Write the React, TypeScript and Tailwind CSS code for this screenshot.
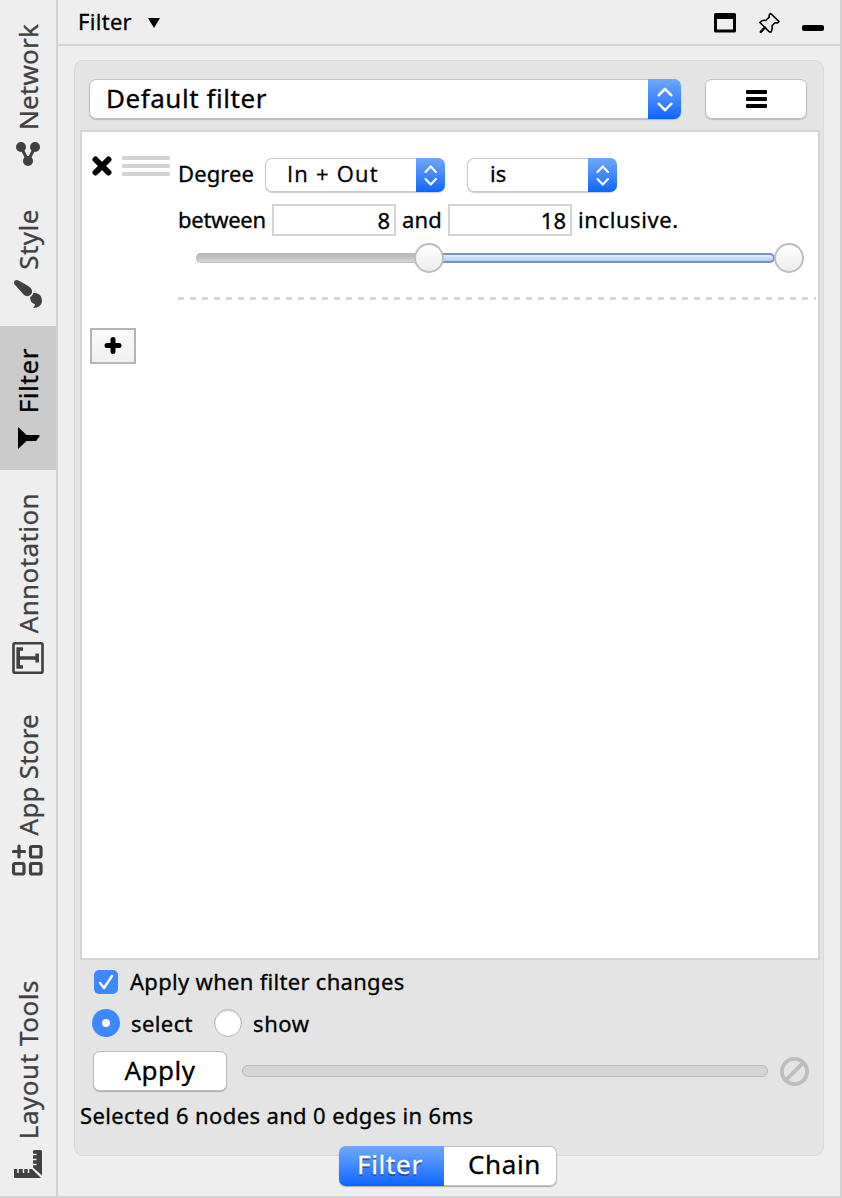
import React from "react";

function Arrows({ className, size }: { className: string; size: number }) {
  return (
    <span className={`flex shrink-0 items-center justify-center bg-linear-to-b from-[#6ea7fc] to-[#0564ff] ${className}`}>
      <svg width={size * 0.64} height={size} viewBox="0 0 16 25" fill="none" stroke="#fff" strokeWidth="2.6" strokeLinecap="round" strokeLinejoin="round">
        <path d="M1.8 8.2 8 1.8l6.2 6.4M1.8 16.8 8 23.2l6.2-6.4" />
      </svg>
    </span>
  );
}

function SideTab({ label, className, tracking, icon }: { label: string; className: string; tracking: string; icon: React.ReactNode }) {
  return (
    <div className={`flex w-14 shrink-0 flex-col items-center justify-end ${className}`}>
      <span className={`rotate-180 text-[26px] leading-[56px] whitespace-nowrap [writing-mode:vertical-rl] ${tracking}`}>{label}</span>
      {icon}
    </div>
  );
}

function Knob({ className }: { className: string }) {
  return <span className={`absolute top-0 size-[30px] rounded-full border-2 border-[#bdbdbd] bg-linear-to-b from-white to-[#ececec] ${className}`} />;
}

export default function App() {
  return (
    <div className="flex h-[1198px] w-[842px] overflow-hidden border-r-2 border-b-2 border-[#d3d3d3] bg-[#eeeeee] font-['Noto_Sans','Open_Sans',sans-serif] text-[22px] leading-[30px] whitespace-nowrap text-black [-webkit-text-stroke:0.3px]">
      <nav className="flex w-[58px] shrink-0 flex-col border-r-2 border-[#d3d3d3] text-[#404040]">
        <SideTab label="Network" className="h-[187px] pb-[21px]" tracking="tracking-[0.2px]"
          icon={
            <svg className="mt-[12px]" width="24" height="24" viewBox="0 0 24 24" fill="currentColor" stroke="currentColor">
              <path d="M5 5 12 19 19 5" fill="none" strokeWidth="3" />
              <circle cx="5" cy="5" r="5" stroke="none" /><circle cx="19" cy="5" r="5" stroke="none" /><circle cx="12" cy="19" r="5" stroke="none" />
            </svg>
          } />
        <SideTab label="Style" className="h-[139px] pb-[18px]" tracking="tracking-[0.5px]"
          icon={
            <svg className="mt-[10px] -rotate-90" width="28" height="28" viewBox="0 0 1792 1792" fill="currentColor">
              <path d="M1615 0q70 0 122.500 46.500t52.500 116.500q0 63-45 151-332 629-465 752-97 91-218 91-126 0-216.500-92.500t-90.500-219.500q0-128 92-212l638-579q59-54 130-54zm-909 1034q39 76 106.500 130t150.500 76l1 71q4 213-129.500 347t-348.500 134q-123 0-218-46.500t-152.500-127.500-86.500-183-29-220q7 5 41 30t62 44.500 59 36.500 46 17q41 0 55-37 25-66 57.500-112.500t69.500-76 88-47.500 103-25.500 125-10.500z" />
            </svg>
          } />
        <SideTab label="Filter" className="h-36 bg-[#cbcbcb] pb-[21px] text-black" tracking="tracking-[0.6px]"
          icon={
            <svg className="mt-[14px] ml-[2px]" width="22" height="22" viewBox="0 0 22 22" fill="currentColor">
              <path d="M0 0 8.500 8H21.500V9.500L18 14H8.500L0 22Z" />
            </svg>
          } />
        <SideTab label="Annotation" className="h-[222px] pb-[18px]" tracking="tracking-[0.4px]"
          icon={
            <svg className="mt-[9px] -ml-px" width="32" height="32" viewBox="0 0 32 32" fill="none" stroke="currentColor">
              <rect x="1.500" y="1.300" width="29" height="29.400" rx="1.5" strokeWidth="2.6" />
              <path d="M11 7H6.200V25H11M6 16H25M25.200 11.500V20.500" strokeWidth="3.6" />
            </svg>
          } />
        <SideTab label="App Store" className="h-[202px] pb-[18px]" tracking="tracking-[0.2px]"
          icon={
            <svg className="mt-[9px]" width="32" height="32" viewBox="0 0 32 32" fill="none" stroke="currentColor" strokeWidth="3.2">
              <path d="M1.500 7.500H12.500M7 2V13" strokeLinecap="round" />
              <rect x="18.500" y="2.500" width="10.500" height="10.500" rx="1.8" /><rect x="1.500" y="19.500" width="10.500" height="10.500" rx="1.8" /><rect x="18.500" y="19.500" width="10.500" height="10.500" rx="1.8" />
            </svg>
          } />
        <SideTab label="Layout Tools" className="mt-auto h-[236px] pb-[18px]" tracking="tracking-[0.55px]"
          icon={
            <svg className="mt-[11px] -ml-px" width="28" height="28" viewBox="0 0 28 28">
              <path d="M19 1.500Q19 0 20.500 0H26.500Q28 0 28 1.500V25.500L19 17.500ZM0 19H18L27 28H1.500Q0 28 0 26.500Z" fill="currentColor" />
              <path d="M18.500 4.500H22.500M18.500 9.500H22.500M18.500 14.500H22.500M4 18.500V23M9.500 18.500V23M14.500 18.500V23" stroke="#eee" strokeWidth="1.5" />
            </svg>
          } />
      </nav>

      <main className="flex min-w-0 flex-1 flex-col">
        <header className="flex h-[46px] shrink-0 items-center border-b-2 border-[#d3d3d3] pr-4 pl-5">
          <span className="-mt-0.5 tracking-[0.3px]">Filter</span>
          <svg className="ml-4 mt-px" width="12" height="10" viewBox="0 0 12 10"><path d="M0 0H12L6 10Z" /></svg>
          <div className="ml-auto flex items-center">
            <svg className="mt-px" width="22" height="20" viewBox="0 0 22 20" fillRule="evenodd"><path d="M1.500 0H20.500Q22 0 22 1.500V18Q22 19.500 20.500 19.500H1.500Q0 19.500 0 18V1.500Q0 0 1.500 0ZM3 6V16.500H19V6Z" /></svg>
            <svg className="mt-px ml-[23px]" width="22" height="22" viewBox="0 0 22 22" fill="none" stroke="#000" strokeWidth="1.6" strokeLinejoin="round" strokeLinecap="round">
              <path d="M11.700 1.500 19.900 9.300Q19.500 11.500 16 10.700L13 13.800Q13.700 17.500 12 20L10.500 20 0.900 10.500Q3.500 7.600 6.700 8.500L10.300 5.200Q9.500 2.500 11.700 1.500Z" /><path d="M6 15.500 1.800 19.800" strokeWidth="2.4" />
            </svg>
            <span className="mt-3 ml-[21px] h-1.5 w-[22px] rounded-[2px] bg-black" />
          </div>
        </header>

        <section className="mt-[14px] ml-4 flex h-[1096px] w-[750px] shrink-0 flex-col rounded-[9px] border border-[#d9d9d9] bg-[#e4e4e4]">
          <div className="mt-[18px] ml-[14px] flex h-10">
            <button className="flex w-[592px] overflow-hidden rounded-[7px] bg-white shadow-[inset_0_0_0_1px_#c0c0c0,0_1px_1px_#bbb]">
              <span className="flex-1 pl-[17px] text-left text-[26px] leading-[38px] tracking-[0.55px]">Default filter</span>
              <Arrows className="h-10 w-[33px]" size={25} />
            </button>
            <button className="ml-6 flex w-[102px] items-center justify-center rounded-[7px] border border-[#c0c0c0] bg-white shadow-[0_1px_1px_#bbb]">
              <span className="flex flex-col gap-[3.500px]"><i className="h-[3.500px] w-[21px] rounded-[1px] bg-black" /><i className="h-[3.500px] w-[21px] rounded-[1px] bg-black" /><i className="h-[3.500px] w-[21px] rounded-[1px] bg-black" /></span>
            </button>
          </div>

          <div className="mt-[11px] ml-[5px] flex h-[830px] w-[740px] shrink-0 flex-col border-2 border-[#d3d3d3] bg-white">
            <div className="flex h-[168px]">
              <svg className="mt-6 ml-[10px]" width="20" height="20" viewBox="0 0 20 20" stroke="#000" strokeWidth="6" strokeLinecap="round"><path d="M3.500 3.500 16.500 16.500M16.500 3.500 3.500 16.500" /></svg>
              <div className="mt-6 ml-[10px] flex w-12 flex-col gap-1">
                <i className="h-1 rounded-[1px] bg-[#d3d3d3]" /><i className="h-1 rounded-[1px] bg-[#d3d3d3]" /><i className="h-1 rounded-[1px] bg-[#d3d3d3]" />
              </div>
              <div className="ml-2 flex w-[638px] flex-col">
                <div className="mt-[26px] flex h-[34px]">
                  <span className="w-[87px] leading-[31px] tracking-[0.1px]">Degree</span>
                  <button className="flex w-[180px] overflow-hidden rounded-[7px] shadow-[inset_0_0_0_1px_#c8c8c8,0_1px_1px_#ccc]">
                    <span className="flex-1 pl-[22px] text-left font-['Open_Sans',sans-serif] leading-[31px] tracking-[1.2px]">In + Out</span>
                    <Arrows className="h-[34px] w-[29px]" size={21} />
                  </button>
                  <button className="ml-[22px] flex w-[150px] overflow-hidden rounded-[7px] shadow-[inset_0_0_0_1px_#c8c8c8,0_1px_1px_#ccc]">
                    <span className="flex-1 pl-[23px] text-left leading-[31px]">is</span>
                    <Arrows className="h-[34px] w-[29px]" size={21} />
                  </button>
                </div>
                <div className="mt-3 flex h-8 leading-[31px]">
                  <span className="w-[94px] tracking-[-0.25px]">between</span>
                  <span className="w-[124px] border-2 border-[#d3d3d3] pr-1 text-right leading-7">8</span>
                  <span className="w-[52px] pl-1.5 tracking-[0.2px]">and</span>
                  <span className="w-[124px] border-2 border-[#d3d3d3] pr-1 text-right leading-7">18</span>
                  <span className="pl-1.5 tracking-[0.6px]">inclusive.</span>
                </div>
                <div className="relative mt-[7px] ml-[17px] flex h-[30px] w-[609px] items-center">
                  <span className="ml-px h-[10px] w-[240px] rounded-l-[5px] bg-linear-to-b from-[#b3b3b3] via-[#c4c4c4] to-[#dcdcdc] shadow-[inset_0_0_0_1px_#bcbcbc]" />
                  <span className="h-[10px] w-[339px] rounded-[5px] border-2 border-[#7995bd] bg-linear-to-b from-[#e6f1ff] to-[#a9cdfa]" />
                  <Knob className="left-[218.500px]" />
                  <Knob className="left-[578.500px]" />
                </div>
                <svg className="mt-6" width="638" height="3"><path d="M0 1.500H638" stroke="#d3d3d3" strokeWidth="3" strokeDasharray="6 6" /></svg>
              </div>
            </div>
            <button className="mt-7 ml-2 flex h-9 w-[46px] items-center justify-center border-2 border-[#b5b5b5] bg-linear-to-b from-[#fafafa] to-[#f0f0f0]">
              <svg width="18" height="18" viewBox="0 0 18 18" stroke="#000" strokeWidth="5" strokeLinecap="round"><path d="M3 8.500H15M9 2.500V14.500" /></svg>
            </button>
          </div>

          <div className="mt-[10px] flex h-6 items-center pl-[19px]">
            <span className="flex size-6 items-center justify-center rounded-[5px] bg-[#3c89fd]">
              <svg width="16" height="16" viewBox="0 0 16 16" fill="none" stroke="#fff" strokeWidth="2.4" strokeLinecap="round" strokeLinejoin="round"><path d="M2 9 6 14 14 2" /></svg>
            </span>
            <span className="-mt-0.5 ml-3 tracking-[0.3px]">Apply when filter changes</span>
          </div>
          <div className="mt-[15px] flex h-7 items-center pl-[17px]">
            <span className="flex size-7 items-center justify-center rounded-full bg-[#3c89fd]"><i className="size-2 rounded-full bg-white" /></span>
            <span className="ml-[11px] w-[83px] tracking-[0.4px]">select</span>
            <span className="size-7 rounded-full border border-[#b5b5b5] bg-white shadow-[inset_0_1px_2px_#ccc]" />
            <span className="ml-[11px] tracking-[0.6px]">show</span>
          </div>
          <div className="mt-[14px] flex h-10 items-center pl-[18px]">
            <button className="h-10 w-[134px] rounded-[7px] border border-[#c0c0c0] bg-white pb-0.5 text-[26px] leading-[35px] tracking-[0.5px] shadow-[0_1px_1px_#aaa]">Apply</button>
            <span className="ml-[15px] h-3 w-[526px] rounded-full border border-[#b9b9b9] bg-[#d4d4d4]" />
            <svg className="ml-3 mt-px" width="29" height="29" viewBox="0 0 29 29" fill="none" stroke="#bdbdbd" strokeWidth="3.8"><circle cx="14.500" cy="14.500" r="12.600" /><path d="M5.600 23.400 23.400 5.600" /></svg>
          </div>
          <p className="mt-[9px] pl-[5px] tracking-[0.37px]">Selected 6 nodes and 0 edges in 6ms</p>
        </section>

        <div className="relative -mt-2.5 ml-[281px] flex h-10 w-[218px] shrink-0 rounded-[7px] bg-white text-[26px] leading-9 shadow-[inset_0_0_0_1px_#c0c0c0,0_1px_1px_#aaa]">
          <button className="w-[105px] rounded-l-[7px] bg-linear-to-b from-[#6ea7fc] to-[#0564ff] pb-1 pl-[18px] text-left tracking-[0.7px] text-white [text-shadow:0_2px_1px_#0006]">Filter</button>
          <button className="flex-1 pb-1 pl-6 text-left tracking-[0.6px]">Chain</button>
        </div>
      </main>
    </div>
  );
}
